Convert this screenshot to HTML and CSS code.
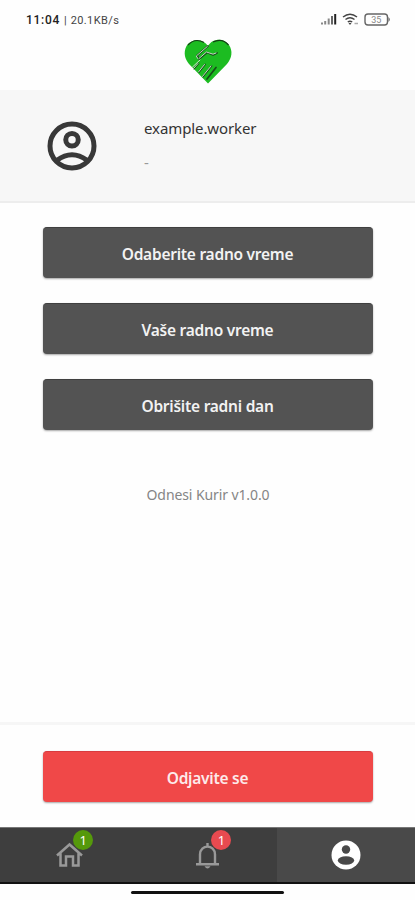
FILE: index.html
```html
<!DOCTYPE html>
<html lang="sr">

<head>
    <meta charset="UTF-8">
    <meta name="viewport" content="width=device-width, initial-scale=1.0">
    <title>Odnesi Kurir</title>
    <link rel="stylesheet" href="styles.css">
</head>

<body>
    <div class="screen">
        <!-- status bar -->
        <div class="status-bar">
            <div class="status-left">
                <span class="clock">11:04</span>
                <span class="divider">|</span>
                <span class="speed">20.1KB/s</span>
            </div>
            <div class="status-icons">
                <svg width="17" height="12" viewBox="0 0 17 12">
                    <path d="M2 9.500v2M5.200 8v3.500M8.700 5.500v6" stroke="#888" stroke-width="2" />
                    <path d="M12 3v8.500" stroke="#666" stroke-width="2" />
                    <path d="M15.200 1v10.500" stroke="#222" stroke-width="2" />
                </svg>
                <svg class="wifi" width="17" height="13" viewBox="0 0 17 13" fill="none" stroke="#444" stroke-width="1.500">
                    <path d="M1 4Q8 -1.500 15 4M3.500 6.500Q8 3 12.500 6.500M5.800 9Q8 7.300 10.200 9" />
                    <path d="M6.500 10h3L8 12z" fill="#444" stroke="none" />
                    <path d="M12.500 10.500h3.500" stroke="#aaa" />
                </svg>
                <svg width="27" height="13" viewBox="0 0 27 13">
                    <rect x="1" y="1" width="22.500" height="11" rx="3" fill="none" stroke="#666" stroke-width="1.400" />
                    <path d="M24.500 4q2.500 2.500 0 5z" fill="#555" />
                    <text class="battery-text" x="12.300" y="9.600" text-anchor="middle">35</text>
                </svg>
            </div>
        </div>

        <header class="header">
            <svg width="50" height="48" viewBox="0 0 50 48">
                <path d="M25 8C20 0 8 .5 3.500 8C0 15 2 21 6 26L25 45.500L44 26C49 20 50 13 46 7C41 0 30 0 25 8Z" fill="#1cbc21" />
                <path d="M5 7Q12-.5 21 4.500M30 4Q39-.5 45.500 7" fill="none" stroke="#143d16" stroke-width="1.200" />
                <g fill="none" stroke-linecap="round" stroke-linejoin="round">
                    <path d="M25 8L14 17.500l1.500 2.500M16 21l8-6.500 6 2.500 4-2M15.500 25.500L11 30.500M22 26.500L16 34M28.500 28L20 38.500M33 29.500L24 41" stroke="#174c19" stroke-width="1.700" />
                    <path d="M24.300 8.500L13.300 18l1.500 2.500M16 20.500l7.500-6.500 6.500 2.200 3-1.200M17 22L9.500 29M15 25.500L10.500 30.500M21.500 26.500L15.500 34M28 28L19.500 38.500" stroke="#d9ead9" stroke-width=".9" />
                </g>
            </svg>
        </header>

        <section class="profile">
            <svg class="avatar" width="60" height="60" viewBox="0 0 24 24" fill="none" stroke="#383838" stroke-width="2">
                <circle cx="12" cy="12" r="8.800" />
                <circle cx="12" cy="9.500" r="2.500" />
                <path d="M6 17.700Q12 13.300 18 17.700" />
            </svg>
            <div class="profile-info">
                <div class="username">example.worker</div>
                <div class="phone">-</div>
            </div>
        </section>

        <main class="content">
            <button type="button" class="btn">Odaberite radno vreme</button>
            <button type="button" class="btn">Vaše radno vreme</button>
            <button type="button" class="btn">Obrišite radni dan</button>
            <p class="version">Odnesi Kurir v1.0.0</p>
        </main>

        <div class="logout">
            <button type="button" class="btn btn-red">Odjavite se</button>
        </div>

        <!-- bottom tabs -->
        <nav class="tabs">
            <a class="tab">
                <svg width="28" height="28" viewBox="0 0 28 28" fill="none" stroke="#999" stroke-width="2.500">
                    <path d="M2 14.500L14.500 3.500L27 14.500M5.500 12v12.400h5.500v-9h7v9h5.500V12" />
                </svg>
                <span class="badge badge-green">1</span>
            </a>
            <a class="tab">
                <svg width="28" height="28" viewBox="0 0 28 28" fill="none" stroke="#999" stroke-width="2.400">
                    <path d="M3 23.200h23M7 23V13.500c0-10.500 15-10.500 15 0V23M14.500 5.500V2" />
                    <path d="M11.500 25.200h6q-3 4.500-6 0z" fill="#999" stroke="none" />
                </svg>
                <span class="badge badge-red">1</span>
            </a>
            <a class="tab active">
                <svg width="30" height="30" viewBox="0 0 30 30">
                    <circle cx="15" cy="15" r="14.500" fill="#fff" />
                    <circle cx="15" cy="9.500" r="4.200" fill="#494949" />
                    <ellipse cx="15" cy="20.500" rx="8.200" ry="4.200" fill="#494949" />
                </svg>
            </a>
        </nav>

        <div class="home-bar">
            <span class="home-line"></span>
        </div>
    </div>
</body>

</html>
```
FILE: styles.css
```css
* {
    margin: 0;
    padding: 0;
    box-sizing: border-box;
}

body {
    font-family: "Noto Sans", sans-serif;
    background-color: #fefefe;
    color: #333;
}

.screen {
    height: 900px;
    display: flex;
    flex-direction: column;
    overflow: hidden;
}

.status-bar {
    height: 38px;
    padding: 0 24px 0 26px;
    display: flex;
    align-items: center;
    justify-content: space-between;
}

.status-left {
    display: flex;
    align-items: center;
    gap: 4px;
    padding-top: 2px;
    font-family: Roboto, sans-serif;
    font-size: 11px;
    color: #444;
}

.clock {
    font-size: 12px;
    font-weight: 500;
    letter-spacing: 0.7px;
    color: #222;
}

.speed {
    letter-spacing: 0.4px;
}

.status-icons {
    display: flex;
    align-items: center;
    gap: 5px;
}

.battery-text {
    font-family: Roboto, sans-serif;
    font-size: 9px;
    fill: #888;
}

.header {
    height: 52px;
    display: flex;
    justify-content: center;
}

.profile {
    height: 113px;
    padding-left: 42px;
    display: flex;
    background-color: #f7f7f7;
    border-bottom: 2px solid #ededed;
}

.avatar {
    margin-top: 26px;
}

.profile-info {
    margin: 27px 0 0 42px;
    line-height: 22px;
}

.username {
    font-size: 15px;
    letter-spacing: -0.1px;
}

.phone {
    margin-top: 12px;
    font-size: 15px;
    color: #999;
}

.content {
    flex: 1;
    padding: 24px 42px 0 43px;
    display: flex;
    flex-direction: column;
    gap: 25px;
}

.btn {
    width: 100%;
    height: 51px;
    flex-shrink: 0;
    border: none;
    border-top: 1px solid #404040;
    border-radius: 4px;
    background-color: #535353;
    color: #f2f2f2;
    font-family: inherit;
    font-size: 15.5px;
    font-weight: 600;
    letter-spacing: -0.25px;
    padding: 1px 1px 0 0;
    box-shadow: 0 1px 2px rgba(0, 0, 0, 0.35);
    cursor: pointer;
}

.version {
    margin-top: 29px;
    text-align: center;
    font-size: 14px;
    line-height: 22px;
    letter-spacing: -0.1px;
    color: #858585;
}

.logout {
    height: 105px;
    padding: 26px 42px 0 43px;
    border-top: 3px solid #f6f6f6;
}

.btn-red {
    background-color: #f04848;
    border-top-color: #d83c40;
    color: #fdeaea;
}

.tabs {
    height: 57px;
    display: grid;
    grid-template-columns: repeat(3, 1fr);
    background-color: #3e3e3e;
    border-top: 1px solid #777;
    border-bottom: 2px solid #111;
}

.tab {
    position: relative;
    display: flex;
    align-items: center;
    justify-content: center;
    padding-bottom: 1px;
}

.active {
    background-color: #494949;
}

/* counter in the corner of the tab icon */
.badge {
    position: absolute;
    top: 2px;
    left: 50%;
    width: 20px;
    height: 20px;
    margin-left: 4px;
    border-radius: 50%;
    color: #fff;
    font-size: 13px;
    line-height: 20px;
    text-align: center;
}

.badge-green {
    background-color: #55990b;
}

.badge-red {
    background-color: #e84a50;
}

.home-bar {
    height: 16px;
    display: flex;
    align-items: center;
    justify-content: center;
}

.home-line {
    width: 153px;
    height: 3px;
    border-radius: 2px;
    background-color: #111;
}
```
